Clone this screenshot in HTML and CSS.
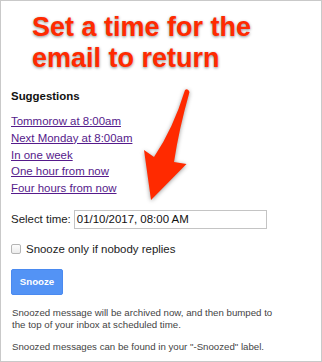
FILE: index.html
```html
<!DOCTYPE html>
<html>
<head>
<meta charset="utf-8">
<link rel="stylesheet" href="styles.css">
</head>
<body>
<div class="panel">
  <div class="title">Set a time for the<br>email to return</div>
  <div class="heading">Suggestions</div>
  <div class="links">
    <a href="#">Tommorow at 8:00am</a>
    <a href="#">Next Monday at 8:00am</a>
    <a href="#">In one week</a>
    <a href="#">One hour from now</a>
    <a href="#">Four hours from now</a>
  </div>
  <div class="select-row">
    <span class="label">Select time:</span>
    <span class="input">01/10/2017, 08:00 AM</span>
  </div>
  <div class="check-row">
    <span class="checkbox"></span>
    <span>Snooze only if nobody replies</span>
  </div>
  <div class="button">Snooze</div>
  <p class="note">Snoozed message will be archived now, and then bumped to<br>the top of your inbox at scheduled time.</p>
  <p class="note second">Snoozed messages can be found in your "-Snoozed" label.</p>
  <svg class="arrow" width="322" height="362" viewBox="0 0 322 362">
    <path d="M184,89 Q187,87 188.5,91 Q178,128 173,161 L185.5,163 L150,199 L143,149 L153,156 Q172,128 184,89 Z" fill="#ff2a00"/>
  </svg>
</div>
</body>
</html>
```
FILE: styles.css
```css
html, body {
  margin: 0;
  padding: 0;
  background: #fff;
}
.panel {
  position: relative;
  box-sizing: border-box;
  width: 322px;
  height: 362px;
  border: 1px solid #c9c9c9;
  padding: 11px 10px 0 10px;
  font-family: "Liberation Sans", Arial, sans-serif;
  color: #222;
  overflow: hidden;
}
.title {
  margin-left: 21px;
  font-size: 27px;
  line-height: 31px;
  font-weight: bold;
  color: #ff2a00;
  text-shadow: 0 1px 3px rgba(0,0,0,0.45);
}
.heading {
  margin-top: 15px;
  font-size: 11.44px;
  line-height: 14px;
  font-weight: bold;
  color: #111;
}
.links {
  margin-top: 10px;
  display: flex;
  flex-direction: column;
  align-items: flex-start;
}
.links a {
  font-size: 11.44px;
  line-height: 16.75px;
  color: #551a8b;
  text-decoration: underline;
}
.select-row {
  margin-top: 13px;
  display: flex;
  align-items: center;
  font-size: 11.44px;
}
.label {
  margin-right: 3px;
}
.input {
  box-sizing: border-box;
  width: 193px;
  height: 19px;
  border: 1px solid #c4c4c4;
  padding: 0 2px;
  line-height: 17px;
  font-size: 11.44px;
  color: #111;
}
.check-row {
  margin-top: 13px;
  display: flex;
  align-items: center;
  gap: 5px;
  font-size: 11.44px;
  line-height: 14px;
}
.checkbox {
  box-sizing: border-box;
  width: 10px;
  height: 10px;
  border: 1px solid #b5b5b5;
  border-radius: 2px;
  background: linear-gradient(#fdfdfd, #ececec);
}
.button {
  margin-top: 13px;
  box-sizing: border-box;
  width: 52px;
  height: 26px;
  background: #5393f5;
  border: 1px solid #4a8af0;
  border-radius: 2px;
  color: #fff;
  font-weight: bold;
  font-size: 9.7px;
  display: flex;
  align-items: center;
  justify-content: center;
}
.note {
  margin: 12px 0 0 1px;
  font-size: 9.68px;
  line-height: 12px;
  color: #444;
}
.note.second {
  margin-top: 10px;
}
.arrow {
  position: absolute;
  left: 0;
  top: 0;
  filter: drop-shadow(0 1px 2px rgba(0,0,0,0.4));
}
```
